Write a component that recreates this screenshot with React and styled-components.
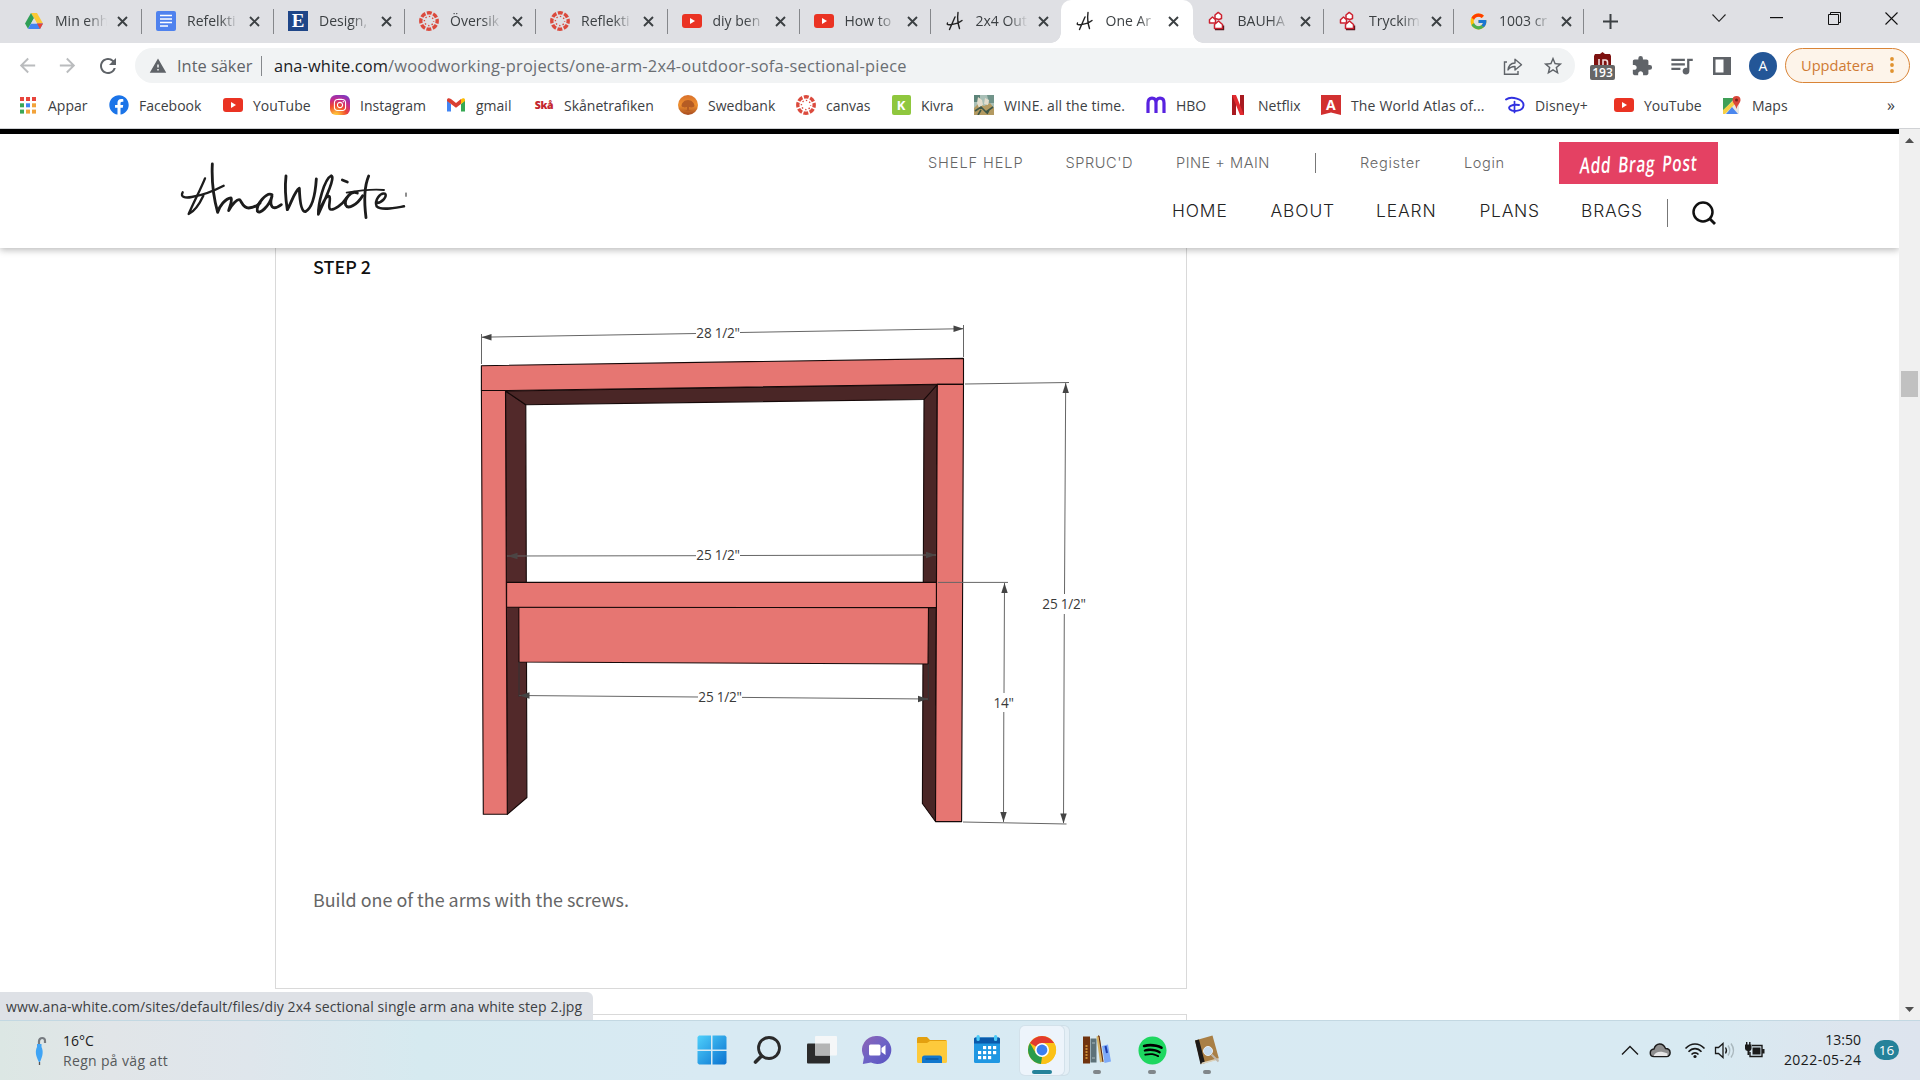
import React from "react";
import styled, { createGlobalStyle, css } from "styled-components";
import {
  MdArrowBack,
  MdArrowForward,
  MdRefresh,
  MdWarning,
  MdExtension,
  MdStarBorder,
  MdQueueMusic,
} from "react-icons/md";
import { FaFacebook, FaInstagram, FaSpotify } from "react-icons/fa";
import { FcGoogle } from "react-icons/fc";

const ui = `"Open Sans", "Noto Sans", sans-serif`;

const Global = createGlobalStyle`
  * { box-sizing: border-box; }
  body { margin: 0; background: #fff; overflow: hidden; }
  svg { display: block; flex: none; }
`;

const Screen = styled.div`
  width: 1920px;
  height: 1080px;
  display: flex;
  flex-direction: column;
  overflow: hidden;
  font-family: ${ui};
  font-size: 14px;
  color: #3c4043;
  background: #fff;
`;

/* ---------- tab strip ---------- */
const TabStrip = styled.div`
  height: 43px;
  flex: none;
  display: flex;
  background: #dfe0e4;
  padding-left: 10px;
`;
const TabBox = styled.div`
  width: ${(p) => p.$w}px;
  height: 43px;
  flex: none;
  display: flex;
  align-items: center;
  padding: 0 0 1px 14px;
  position: relative;
  ${(p) =>
    p.$active &&
    css`
      background: #fff;
      border-radius: 10px 10px 0 0;
      &::before,
      &::after {
        content: "";
        position: absolute;
        bottom: 0;
        width: 10px;
        height: 10px;
      }
      &::before {
        left: -10px;
        background: radial-gradient(circle at 0 0, transparent 9.5px, #fff 10px);
      }
      &::after {
        right: -10px;
        background: radial-gradient(circle at 100% 0, transparent 9.5px, #fff 10px);
      }
    `}
`;
const TabTitle = styled.div`
  width: 52px;
  margin: 0 10px 0 11px;
  white-space: nowrap;
  line-height: 20px;
  mask-image: linear-gradient(to right, #000 62%, transparent 100%);
`;
const TabDivider = styled.div`
  width: 1px;
  height: 25px;
  margin-left: auto;
  background: #85878b;
`;
const NewTab = styled.div`
  width: 52px;
  display: flex;
  align-items: center;
  justify-content: center;
`;
const WindowControls = styled.div`
  margin-left: auto;
  width: 231px;
  height: 36px;
  display: grid;
  grid-template-columns: 60px 55px 60px 54px;
  align-items: center;
  justify-items: center;
`;

/* ---------- toolbar ---------- */
const Toolbar = styled.div`
  height: 45px;
  flex: none;
  display: flex;
  align-items: center;
  padding-left: 16px;
`;
const NavButton = styled.div`
  width: ${(p) => p.$w || 40}px;
  color: ${(p) => (p.$dim ? "#babcbe" : "#5f6368")};
`;
const AddressBar = styled.div`
  width: 1440px;
  height: 35px;
  border-radius: 18px;
  background: #f1f3f4;
  display: flex;
  align-items: center;
  padding: 0 11px 0 14px;
  font-size: 16.4px;
  color: #5f6368;
  white-space: nowrap;
`;
const Security = styled.span`
  margin-left: 10px;
  width: 84px;
`;
const AddressDivider = styled.div`
  width: 1px;
  height: 20px;
  background: #85888c;
  margin-right: 12px;
`;
const Url = styled.span`
  color: #6a6e73;
  letter-spacing: 0.235px;
  b {
    font-weight: 400;
    letter-spacing: 0.1px;
    color: #202124;
  }
`;
const AddressActions = styled.div`
  margin-left: auto;
  display: flex;
  align-items: center;
  gap: 19px;
`;
const Extensions = styled.div`
  width: 210px;
  padding-left: 15px;
  display: flex;
  align-items: center;
  color: #5f6368;
`;
const ExtensionIcon = styled.div`
  margin-left: ${(p) => p.$gap}px;
`;
const Shield = styled.div`
  width: 25px;
  height: 28px;
  display: flex;
  flex-direction: column;
  align-items: center;
`;
const ShieldCount = styled.div`
  width: 25px;
  height: 15px;
  flex: none;
  border-radius: 2px;
  background: #666;
  color: #fff;
  font-size: 12px;
  font-weight: 600;
  line-height: 15px;
  text-align: center;
`;
const Avatar = styled.div`
  width: 28px;
  height: 28px;
  margin-left: 18px;
  border-radius: 50%;
  background: #235697;
  color: #fff;
  display: flex;
  align-items: center;
  justify-content: center;
`;
const UpdateButton = styled.div`
  width: 125px;
  height: 35px;
  border: 1px solid #d98436;
  border-radius: 18px;
  background: #fdf4ea;
  color: #cf7a33;
  font-size: 14.6px;
  display: flex;
  align-items: center;
  justify-content: space-between;
  padding: 0 15px 2px;
`;

/* ---------- bookmarks ---------- */
const Bookmarks = styled.div`
  height: 41px;
  flex: none;
  display: flex;
  padding: 0 0 6px 18px;
  border-bottom: 1px solid #d0d2d5;
`;
const BookmarkItem = styled.div`
  width: ${(p) => p.$w}px;
  flex: none;
  display: flex;
  align-items: center;
  gap: 10px;
  white-space: nowrap;
  letter-spacing: ${(p) => p.$ls || 0}px;
`;
const IconSlot = styled.div`
  width: 20px;
  height: 20px;
  flex: none;
  display: flex;
  align-items: center;
  justify-content: center;
`;
const SkaMark = styled.span`
  color: #c4262e;
  font-size: 10.5px;
  font-weight: 800;
  letter-spacing: -0.3px;
`;
const InstaTile = styled.div`
  width: 20px;
  height: 20px;
  border-radius: 6px;
  display: flex;
  align-items: center;
  justify-content: center;
  color: #fff;
  background: radial-gradient(circle at 30% 105%, #fec53a 8%, #f0492f 42%, #c42a8e 66%, #5b3fd8 100%);
`;
const LetterTile = styled.div`
  width: ${(p) => p.$w || 20}px;
  height: 20px;
  background: ${(p) => p.$bg};
  border-radius: ${(p) => p.$r || 0}px;
  clip-path: ${(p) => (p.$ribbon ? "polygon(0 0, 100% 0, 100% 100%, 50% 88%, 0 100%)" : "none")};
  color: #fff;
  font: 700 ${(p) => p.$size || 15}px / 20px ${(p) => p.$font || ui};
  text-align: center;
`;
const Overflow = styled.div`
  margin: 0 25px 0 auto;
  align-self: center;
  font-size: 16px;
`;

/* ---------- page ---------- */
const Viewport = styled.div`
  height: 891px;
  flex: none;
  display: flex;
  position: relative;
`;
const Page = styled.div`
  width: 1899px;
  height: 891px;
  overflow: hidden;
`;
const SiteHeader = styled.header`
  height: 119px;
  border-top: 5px solid #000;
  background: #fff;
  box-shadow: 0 2px 7px rgba(0, 0, 0, 0.28);
  position: relative;
  display: flex;
  justify-content: space-between;
  padding: 0 181px 0 180px;
`;
const Logo = styled.div`
  padding-top: 27px;
`;
const Menus = styled.div`
  display: flex;
  flex-direction: column;
  align-items: flex-end;
  padding-top: 8px;
  font-family: Inter, sans-serif;
`;
const TopMenu = styled.nav`
  height: 42px;
  display: flex;
  align-items: center;
  font-size: 14.6px;
  color: #666;
  font-weight: 300;
`;
const MainMenu = styled.nav`
  height: 56px;
  display: flex;
  align-items: center;
  padding: 1px 2px 0 0;
  font-size: 17.4px;
  color: #222;
  font-weight: 300;
`;
const MenuLink = styled.a`
  width: ${(p) => p.$w}px;
  white-space: nowrap;
  letter-spacing: ${(p) => p.$ls || 0}px;
  padding-bottom: ${(p) => p.$up || 0}px;
`;
const MenuRule = styled.div`
  width: 1px;
  height: ${(p) => p.$h}px;
  margin-right: ${(p) => p.$gap}px;
  background: #777;
`;
const BragButton = styled.div`
  width: 159px;
  height: 42px;
  background: #e44163;
  color: #fff;
  display: flex;
  align-items: center;
  justify-content: center;
  span {
    font: 600 22px "Open Sans", sans-serif;
    white-space: nowrap;
    transform: scaleX(0.7) skewX(-7deg) rotate(-1deg);
    letter-spacing: 1px;
    word-spacing: 3px;
  }
`;
const StepCard = styled.section`
  width: 912px;
  height: 741px;
  margin-left: 275px;
  border: 1px solid #d9d9d9;
  border-top: 0;
  padding: 4px 37px 0;
  font-family: "Noto Sans CJK SC", "Noto Sans CJK JP", sans-serif;
`;
const NextCard = styled.section`
  width: 912px;
  height: 40px;
  margin: 25px 0 0 275px;
  border: 1px solid #d9d9d9;
`;
const StepTitle = styled.h3`
  margin: 0;
  font-size: 17.9px;
  font-weight: 500;
  line-height: 28px;
  color: #111;
`;
const Figure = styled.figure`
  margin: 40px 0 0 162px;
`;
const Caption = styled.p`
  margin: 45px 0 0;
  font-size: 17.9px;
  line-height: 28px;
  color: #666;
`;
const Scrollbar = styled.div`
  width: 21px;
  background: #f0f0f0;
  display: flex;
  flex-direction: column;
  align-items: center;
  padding: 9px 0 8px;
`;
const Thumb = styled.div`
  width: 17px;
  height: 26px;
  margin: 228px 0 auto;
  background: #c1c1c1;
`;
const StatusBubble = styled.div`
  position: absolute;
  left: 0;
  bottom: 0;
  width: 593px;
  height: 28px;
  padding-left: 6px;
  border-radius: 0 6px 0 0;
  background: #dee1e6;
  line-height: 29px;
  white-space: nowrap;
  letter-spacing: 0.09px;
`;

/* ---------- taskbar ---------- */
const Taskbar = styled.div`
  height: 60px;
  flex: none;
  display: flex;
  border-top: 1px solid #c3d8e2;
  background: linear-gradient(90deg, #dce7e4 0, #e1e5e8 110px, #dfe6ec 250px, #d6eaf0 420px, #d8eaf3 700px, #d8eaf2 1700px, #dde5ee 1850px, #dde4ee 1920px);
`;
const Weather = styled.div`
  width: 684px;
  display: flex;
  align-items: center;
  padding-left: 33px;
  gap: 14px;
  line-height: 20px;
  color: #56595b;
  letter-spacing: 0.33px;
  b {
    display: block;
    font-weight: 400;
    letter-spacing: 0;
    color: #1c1c1c;
  }
`;
const Apps = styled.div`
  display: flex;
  width: 551px;
`;
const AppSlot = styled.div`
  width: 55.1px;
  flex: none;
  display: flex;
  justify-content: center;
  padding-top: 5px;
`;
const AppTile = styled.div`
  width: 48px;
  height: 49px;
  border-radius: 5px;
  display: flex;
  flex-direction: column;
  align-items: center;
  padding-top: 9px;
  ${(p) =>
    p.$active &&
    css`
      width: 44px;
      background: #edf4fb;
      box-shadow: 0 0 0 1px #d3e1ea, 5px 0 0 0 #e4eff6, 5px 0 0 1px #cfdfe8;
    `}
`;
const SpotifyDisc = styled.div`
  width: 30px;
  height: 30px;
  color: #1ed760;
  display: flex;
  align-items: center;
  justify-content: center;
  background: radial-gradient(circle, #000 58%, transparent 59%);
`;
const RunMark = styled.div`
  width: ${(p) => (p.$active ? 20 : 8)}px;
  height: 4px;
  border-radius: 2px;
  margin-top: 5px;
  background: ${(p) => (p.$active ? "#25829a" : "#80868a")};
`;
const Tray = styled.div`
  margin-left: auto;
  display: flex;
  align-items: center;
  padding: 0 21px 2px 0;
  color: #1a1a1a;
`;
const TrayIcons = styled.div`
  display: flex;
  align-items: center;
  margin-right: 11px;
`;
const Clock = styled.div`
  width: 82px;
  text-align: right;
  line-height: 20px;
  white-space: nowrap;
`;
const ClockDate = styled.div`
  letter-spacing: 0.45px;
  margin-right: -0.45px;
`;
const Badge = styled.div`
  width: 25px;
  height: 20px;
  border-radius: 10px;
  margin-left: 13px;
  background: #25829a;
  color: #fff;
  font-size: 13.5px;
  line-height: 20px;
  text-align: center;
`;

/* ---------- icons ---------- */
const Drive = () => (
  <svg width="20" height="20" viewBox="0 0 20 20">
    <path d="M7 2h6l6 10.500h-6z" fill="#fcc934" />
    <path d="M7 2l3 5.200L4 17.800 1 12.500z" fill="#2f9e56" />
    <path d="M7 12.500h12l-3 5.500H4z" fill="#4384f3" />
    <path d="M13 12.500h6L16 18z" fill="#e94335" />
    <path d="M10 7.300l3 5.200H7z" fill="#dfe0e4" />
  </svg>
);
const Docs = () => (
  <svg width="20" height="20" viewBox="0 0 20 20">
    <rect width="20" height="20" rx="2" fill="#4f82ee" />
    <path d="M4 4.500h12M4 8h12M4 11.500h12M4 15h8" stroke="#fff" strokeWidth="1.700" />
  </svg>
);
const Canvas = () => (
  <svg width="20" height="20" viewBox="0 0 20 20">
    <circle cx="10" cy="10" r="8.200" fill="none" stroke="#db4a3d" strokeWidth="3.400" strokeDasharray="4.900 1.540" strokeDashoffset="2.400" />
    <circle cx="10" cy="10" r="4.600" fill="none" stroke="#db4a3d" strokeWidth="1.400" strokeDasharray="1.400 2.213" strokeDashoffset="0.700" />
  </svg>
);
const YouTube = () => (
  <svg width="20" height="20" viewBox="0 0 20 20">
    <rect y="3" width="20" height="14" rx="3" fill="#ea3323" />
    <path d="M8 7l5 3-5 3z" fill="#fff" />
  </svg>
);
const AMark = () => (
  <svg width="20" height="20" viewBox="0 0 20 20" fill="none" stroke="#222" strokeWidth="1.400" strokeLinecap="round">
    <path d="M10 6L4.500 18.500M13 1.500c-.8 6 0 11.500 1.500 16M2.500 12c-1 2 1 2 4 1.500 5-.7 8-2 10.500-4" />
  </svg>
);
const Bauhaus = () => (
  <svg width="20" height="20" viewBox="0 0 20 20" stroke="#cc2230" strokeWidth="1.500" fill="#fff" strokeLinejoin="round">
    <path d="M8 7.500V4l3.200-2.600L14.500 4v3.500l-2.500 1z" />
    <path d="M2.500 12V8.700L5.500 6l3 2.700V12z" />
    <path d="M7.500 17.500v-4l4-3.500 4 3.500v4z" />
    <path d="M8 18.700h8.600V14.500" stroke="#5e1a20" fill="none" strokeWidth="1.200" />
  </svg>
);
const CloseX = () => (
  <svg width="11" height="11" viewBox="0 0 11 11" stroke="#3c4043" strokeWidth="1.900">
    <path d="M1 1l9 9M10 1l-9 9" />
  </svg>
);
const Share = () => (
  <svg width="20" height="20" viewBox="0 0 20 20" fill="none" stroke="#5f6368" strokeWidth="1.400">
    <path d="M4 6H1.500v12.300h13.500V15" />
    <path d="M5 14c.5-4.500 3-6.800 7-7V3.200l6.500 5.500-6.500 5.300V10.500c-3.500 0-5.500 1-7 3.500z" strokeLinejoin="round" />
  </svg>
);
const AppsGrid = () => (
  <svg width="16" height="17" viewBox="0 0 16 17">
    {["#e8453c", "#e8453c", "#e8453c", "#3aa757", "#4285f4", "#f2a33a", "#3aa757", "#f2a33a", "#f2a33a"].map((c, i) => (
      <rect key={i} x={(i % 3) * 6} y={Math.floor(i / 3) * 6.3} width="4" height="4" fill={c} />
    ))}
  </svg>
);
const Gmail = () => (
  <svg width="18" height="14" viewBox="0 0 18 14">
    <path d="M0 2v11.500h4V6z" fill="#4285f4" />
    <path d="M18 2v11.500h-4V6z" fill="#34a853" />
    <path d="M14 1.200V6l4-3V2c0-2-2-2.500-4-.8z" fill="#fbbc04" />
    <path d="M0 2C0 0 2-.5 4 1l5 4 5-4v5L9 9.800 4 6 0 3z" fill="#d93f32" />
  </svg>
);
const Swedbank = () => (
  <svg width="20" height="20" viewBox="0 0 20 20">
    <defs>
      <linearGradient id="swed" x1="0" y1="0" x2="0" y2="1">
        <stop offset="0" stopColor="#d8702c" />
        <stop offset=".5" stopColor="#f0912f" />
        <stop offset="1" stopColor="#a54a20" />
      </linearGradient>
    </defs>
    <circle cx="10" cy="10" r="10" fill="url(#swed)" />
    <path d="M3.500 11c0-3 3-6 6.500-6s6.500 3 6.500 6c-1.500 2-4 1.500-5.500 1v3l3 1H6l3-1v-3c-1.500.5-4 1-5.500-1z" fill="#b55c24" />
  </svg>
);
const Wine = () => (
  <svg width="20" height="20" viewBox="0 0 20 20">
    <rect width="20" height="20" fill="#a9bfb6" />
    <path d="M0 0h6v7H0z" fill="#5c8378" />
    <path d="M13 0h7v8h-5z" fill="#71948a" />
    <path d="M0 13l5-5 5 3 6-3 4 5v7H0z" fill="#b39a61" />
    <path d="M4 2l4 3 1 5-4 3-2-5zM11 3l4 2-1 5-4-1z" fill="#e3ddcc" />
    <path d="M1 16l6-4 5 5 7-5M4 20l3-5M13 19l2-4" stroke="#3e5747" strokeWidth="1.600" fill="none" />
  </svg>
);
const Hbo = () => (
  <svg width="20" height="18" viewBox="0 0 20 18" fill="none" stroke="#5822e0" strokeWidth="3.200">
    <path d="M2 17V7c0-3.300 1.500-4.800 4-4.800S10 3.800 10 7v10M10 7c0-3.300 1.500-4.800 4-4.800S18 3.800 18 7v10" />
  </svg>
);
const Netflix = () => (
  <svg width="12" height="20" viewBox="0 0 12 20">
    <path d="M0 0h4v20H0zM8 0h4v20H8z" fill="#a81a20" />
    <path d="M0 0h4l8 20H8z" fill="#e22a2f" />
  </svg>
);
const Disney = () => (
  <svg width="20" height="18" viewBox="0 0 20 18" fill="none" stroke="#3030e0" strokeLinecap="round">
    <path d="M1 3.500C6-.5 19 3 18.500 9.500 18 15.500 8 16 5 13.500 2 10.500 7 8.200 14 9" strokeWidth="1.900" />
    <path d="M9.500 5.500v11" strokeWidth="1.700" />
  </svg>
);
const Maps = () => (
  <svg width="18" height="19" viewBox="0 0 18 19">
    <rect y="2" width="16" height="16" rx="1" fill="#e8e8e4" />
    <path d="M0 2h12L0 15z" fill="#3f9f57" />
    <path d="M0 14L11 4l3 2L2 18H0z" fill="#f6cf45" />
    <path d="M3 18l6-7 6 7z" fill="#4b87ee" />
    <path d="M13.500 0a4 4 0 014 4c0 3-3 4.500-4 9-1-4.500-4-6-4-9a4 4 0 014-4z" fill="#d9473a" />
    <circle cx="13.500" cy="4" r="1.500" fill="#7b2119" />
  </svg>
);
const UBlock = () => (
  <svg width="19" height="13" viewBox="0 0 19 13">
    <path d="M9.500 0L12 2h5l1 2v9H1V4l1-2h5z" fill="#7e1210" />
    <path d="M6 7v6M10 13V8h2.500c1.500 0 2 1 2 2.300V13" stroke="#f1dede" strokeWidth="1.600" fill="none" />
  </svg>
);
const Signature = () => (
  <svg width="230" height="60" viewBox="60 110 690 180" fill="none" stroke="#1c1c1c" strokeWidth="8.500" strokeLinecap="round" strokeLinejoin="round">
    <path d="M135 162C122 195 100 235 86 269C100 262 118 240 130 214" strokeWidth="7" />
    <path d="M68 204C60 218 75 222 95 218C130 212 168 196 191 184" strokeWidth="7" />
    <path d="M157 119C155 160 160 218 173 264C178 246 196 222 213 221C218 230 208 248 206 259C216 240 233 222 240 227C246 235 250 251 266 251C284 250 292 244 300 236" />
    <path d="M336 211C320 202 288 240 292 260C298 272 328 246 336 215C327 244 336 262 364 241" />
    <path d="M378 155C374 190 377 225 382 256C394 236 404 200 418 192C419 220 422 262 436 262C456 252 466 210 469 164" />
    <path d="M475 270C474 240 492 165 514 154C526 158 500 215 476 268C484 240 500 212 508 216C514 224 502 250 511 255C522 258 546 242 560 220" strokeWidth="8" />
    <path d="M547 167L562 173M592 206C572 196 552 226 557 242C564 258 592 240 608 214" />
    <path d="M626 155C611 190 613 240 618 280" />
    <path d="M560 205C600 198 640 194 672 197" strokeWidth="5.500" />
    <path d="M650 236C668 234 682 216 675 208C660 204 642 230 650 246C664 260 708 250 732 246" strokeWidth="7.500" />
    <path d="M738 206v10" strokeWidth="3" />
  </svg>
);

/* ---------- plan drawing ---------- */
const Arrow = ({ x, y, dir, fill = "#444" }) => {
  const turn = { left: 0, up: 90, right: 180, down: 270 }[dir];
  return <path d="M0 0L10 -3.200V3.200z" fill={fill} transform={`translate(${x} ${y}) rotate(${turn})`} />;
};
const DimLabel = styled.text`
  font-family: "Open Sans", sans-serif;
  font-size: 13.6px;
  letter-spacing: -0.25px;
  fill: #3a3a3a;
  text-anchor: middle;
`;
const ArmPlan = () => (
  <svg width="620" height="520" viewBox="475 320 620 520">
    <g stroke="#150808" strokeWidth="1.100" strokeLinejoin="round">
      <path d="M505.500 391L525.800 404.700L526.900 797.500L507.300 814.300z" fill="#52292a" />
      <path d="M937.300 384.500L924 399.500L922.400 803.500L935.500 821.500z" fill="#4a2626" />
      <path d="M505.500 391L937.300 384.500L924 399.500L525.800 404.700z" fill="#4a2626" />
      <path d="M481.400 365.700L963.500 358.400V384.300H937.300L505.500 390.500H481.400z" fill="#e67672" />
      <path d="M481.400 390.500H505.500L507.300 814.300H483.300z" fill="#e67672" />
      <path d="M937.300 384.400H963.500L961.600 821.600H935.500z" fill="#e67672" />
      <path d="M518.800 607L928.500 607.500L928 664L519 662z" fill="#e67672" />
      <path d="M506.600 582.400H936.400V607.600L506.600 607.200z" fill="#e67672" />
    </g>
    <g stroke="#666" strokeWidth="1" fill="none">
      <path d="M481.500 334V364M963.500 325V357M481.500 337.200L696 333.500M740 332.500L963.500 328.700" />
      <path d="M507 556L696 555.700M740 555.500L936 555" />
      <path d="M519 695.500L698 697M742 697.400L928 699" />
      <path d="M519 662V697M928.300 664V701" stroke="#333" />
      <path d="M938 582.400H1008M1004.500 583L1004 693M1003.800 712L1003.500 822" />
      <path d="M965 384L1069 382.500M1065.700 383L1064.500 594M1064.300 614L1063.500 823M963 822L1066.500 824" />
    </g>
    <Arrow x={481.5} y={337.2} dir="left" />
    <Arrow x={963.5} y={328.700} dir="right" />
    <Arrow x={507.5} y={556} dir="left" fill="#4b4544" />
    <Arrow x={936} y={555} dir="right" fill="#4b4544" />
    <Arrow x={519.500} y={695.500} dir="left" />
    <Arrow x={928} y={699} dir="right" />
    <Arrow x={1004.500} y={583} dir="up" />
    <Arrow x={1003.500} y={822} dir="down" />
    <Arrow x={1065.700} y={383} dir="up" />
    <Arrow x={1063.500} y={823.500} dir="down" />
    <DimLabel x="718" y="338.200">28 1/2"</DimLabel>
    <DimLabel x="718" y="560.200">25 1/2"</DimLabel>
    <DimLabel x="720" y="702.200">25 1/2"</DimLabel>
    <DimLabel x="1003.700" y="708">14"</DimLabel>
    <DimLabel x="1064" y="609">25 1/2"</DimLabel>
  </svg>
);

/* ---------- taskbar icons ---------- */
const Windows = () => (
  <svg width="30" height="30" viewBox="0 0 30 30">
    <defs>
      <linearGradient id="win" x1="0" y1="0" x2="1" y2="1">
        <stop offset="0" stopColor="#4fd0fb" />
        <stop offset="1" stopColor="#0a72d0" />
      </linearGradient>
    </defs>
    <path d="M2 .5h12v14H.5V2zM15.500.5H28L29.500 2v12.500h-14zM.5 16H14v13.500H2L.5 28zM15.500 16h14v12l-1.500 1.500H15.500z" fill="url(#win)" />
  </svg>
);
const Search = () => (
  <svg width="30" height="30" viewBox="0 0 30 30" fill="none" stroke="#2a2a2a">
    <circle cx="17" cy="13" r="10.500" strokeWidth="2.800" />
    <path d="M9.500 21L3.500 27" strokeWidth="3.600" strokeLinecap="round" />
  </svg>
);
const TaskView = () => (
  <svg width="30" height="30" viewBox="0 0 30 30">
    <rect x="0" y="8.500" width="23" height="20" rx="1" fill="#2b2b2b" />
    <rect x="8" y="1" width="22" height="19.500" rx="1" fill="#f5f7f8" />
    <rect x="8" y="8.500" width="15" height="12" fill="#b4b5b5" />
  </svg>
);
const Chat = () => (
  <svg width="30" height="30" viewBox="0 0 30 30">
    <defs>
      <linearGradient id="chat" x1="0" y1="0" x2="1" y2="1">
        <stop offset="0" stopColor="#9064b4" />
        <stop offset=".5" stopColor="#6d63c6" />
        <stop offset="1" stopColor="#5852c0" />
      </linearGradient>
    </defs>
    <path d="M15 1a14 14 0 11-6 26.500L.8 29 2 22A14 14 0 0115 1z" fill="url(#chat)" />
    <rect x="7" y="9.500" width="11.500" height="11" rx="1.500" fill="#fff" />
    <path d="M19.500 13l4-3v10l-4-3z" fill="#fff" />
  </svg>
);
const Folder = () => (
  <svg width="30" height="30" viewBox="0 0 30 30">
    <path d="M0 3.500Q0 2 1.500 2H10l3 3h15.500Q30 5 30 6.500V12H0z" fill="#e3a010" />
    <path d="M0 8h10l3-2h17v20.500Q30 28 28.500 28h-27Q0 28 0 26.500z" fill="#fdca3c" />
    <path d="M5 28v-5q0-2.500 2.500-2.500h15Q25 20.500 25 23v5z" fill="#1177cd" />
    <path d="M8.500 24h13" stroke="#0b4f93" strokeWidth="1.200" />
  </svg>
);
const Calendar = () => (
  <svg width="30" height="30" viewBox="0 0 30 30">
    <rect x="2" y="2.500" width="26" height="25.500" rx="1.500" fill="#1f97e2" />
    <path d="M3.500 2.500h23q1.500 0 1.500 1.500v4.500H2V4q0-1.500 1.500-1.500z" fill="#0a5aab" />
    <rect x="4.500" y="0" width="3.200" height="6" rx="1.500" fill="#4ccbf7" />
    <rect x="22" y="0" width="3.200" height="6" rx="1.500" fill="#4ccbf7" />
    {[[11, 11], [16, 11], [21, 11], [6, 16], [11, 16], [16, 16], [21, 16], [6, 21], [11, 21], [16, 21]].map(([x, y]) => (
      <rect key={`${x}-${y}`} x={x} y={y} width="3.200" height="3.200" fill="#fff" />
    ))}
  </svg>
);
const Chrome = () => (
  <svg width="30" height="30" viewBox="0 0 30 30">
    <circle cx="15" cy="15" r="14" fill="#fbc116" />
    <path d="M15 15L2.900 8A14 14 0 0127.100 8H15z" fill="#e33b2e" />
    <path d="M2.900 8L9 18.500 15 22l-1 7A14 14 0 012.900 8z" fill="#2a9c4b" />
    <path d="M15 8h12.100A14 14 0 0114 29l7-11z" fill="#fbc116" />
    <circle cx="15" cy="15" r="7" fill="#fff" />
    <circle cx="15" cy="15" r="5.400" fill="#3d7fee" />
  </svg>
);
const Books = () => (
  <svg width="30" height="30" viewBox="0 0 30 30">
    <rect x="1" y="1.500" width="7" height="27" fill="#70340f" />
    <path d="M4.500 10v14" stroke="#c88a35" strokeWidth="2" strokeDasharray="2 1" />
    <rect x="8.500" y="3.500" width="6" height="24" fill="#5d7279" />
    <path d="M10 8h3M10 23h3" stroke="#a8b9bd" />
    <path d="M14.500 1.500l3-1L21.500 26l-3.500 1.500z" fill="#d5b263" />
    <path d="M16 1l1 0 4 26" stroke="#5a2316" fill="none" />
    <path d="M20 11l6-1.500 3 17-6.500 1.500z" fill="#7eaaf8" />
    <path d="M23.500 11l1.500 7" stroke="#1b3dae" strokeWidth="2" />
  </svg>
);
const Journal = () => (
  <svg width="30" height="30" viewBox="0 0 30 30">
    <path d="M3 5.500L20.500.5 27 24 9 29z" fill="#a97f45" />
    <path d="M3 5.500L7 4.400 13 28l-4.500 1.200z" fill="#1d1a18" />
    <path d="M9 29.500l18-5v-1.500L10 27.500z" fill="#ddd3bd" />
    <circle cx="16" cy="16" r="4.500" fill="#c5dbee" stroke="#e9eef2" />
    <path d="M19.500 19.500l7 7" stroke="#bfb8ad" strokeWidth="1.800" />
  </svg>
);
const Umbrella = () => (
  <svg width="16" height="30" viewBox="0 0 16 30">
    <path d="M6 9V5.500C6 .8 12.500.8 12 5.500V7" fill="none" stroke="#777b80" strokeWidth="2.200" />
    <path d="M4 8h4.500v3c2 4 1.500 9-2 16-4-7-4.500-12-2.500-16z" fill="#3fa4f5" />
    <path d="M6.500 26v3" stroke="#555" strokeWidth="1.300" />
  </svg>
);

/* ---------- data ---------- */
const tabs = [
  { t: "Min enh", i: <Drive />, w: 132 },
  { t: "Refelkti", i: <Docs />, w: 132 },
  {
    t: "Design,",
    i: (
      <LetterTile $bg="#1f4688" $size={19} $font='"Liberation Serif", serif'>
        E
      </LetterTile>
    ),
    w: 131,
  },
  { t: "Översik", i: <Canvas />, w: 131 },
  { t: "Reflekti", i: <Canvas />, w: 131.5 },
  { t: "diy ben", i: <YouTube />, w: 132 },
  { t: "How to", i: <YouTube />, w: 131 },
  { t: "2x4 Out", i: <AMark />, w: 130, noRule: true },
  { t: "One Ar", i: <AMark />, w: 132, active: true, noRule: true },
  { t: "BAUHA", i: <Bauhaus />, w: 131.5 },
  { t: "Tryckim", i: <Bauhaus />, w: 130 },
  { t: "1003 cr", i: <FcGoogle size={19} />, w: 130 },
];

const bookmarks = [
  ["Appar", <AppsGrid />, 91],
  ["Facebook", <FaFacebook size={20} color="#1b74e8" />, 114],
  ["YouTube", <YouTube />, 107],
  ["Instagram", <InstaTile><FaInstagram size={14} /></InstaTile>, 116],
  ["gmail", <Gmail />, 88],
  ["Skånetrafiken", <SkaMark>Skå</SkaMark>, 144],
  ["Swedbank", <Swedbank />, 118],
  ["canvas", <Canvas />, 95],
  ["Kivra", <LetterTile $bg="#8fc73e" $w={19} $r={2} $size={13}>K</LetterTile>, 83],
  ["WINE. all the time.", <Wine />, 172, 0.1],
  ["HBO", <Hbo />, 82],
  ["Netflix", <Netflix />, 93],
  ["The World Atlas of...", <LetterTile $bg="#d23030" $size={14} $ribbon>A</LetterTile>, 184, 0.16],
  ["Disney+", <Disney />, 109, 0.15],
  ["YouTube", <YouTube />, 108],
  ["Maps", <Maps />, 90],
];

const apps = [
  [<Windows />],
  [<Search />],
  [<TaskView />],
  [<Chat />],
  [<Folder />],
  [<Calendar />],
  [<Chrome />, true, true],
  [<Books />, true],
  [<SpotifyDisc><FaSpotify size={29} /></SpotifyDisc>, true],
  [<Journal />, true],
];

export default function App() {
  return (
    <Screen>
      <Global />
      <TabStrip>
        {tabs.map((tab, n) => (
          <TabBox key={n} $w={tab.w} $active={tab.active}>
            <IconSlot>{tab.i}</IconSlot>
            <TabTitle>{tab.t}</TabTitle>
            <CloseX />
            {!tab.noRule && <TabDivider />}
          </TabBox>
        ))}
        <NewTab>
          <svg width="15" height="15" viewBox="0 0 15 15" stroke="#3c4043" strokeWidth="2">
            <path d="M7.500 0v15M0 7.500h15" />
          </svg>
        </NewTab>
        <WindowControls>
          <svg width="14" height="8" viewBox="0 0 14 8" fill="none" stroke="#222" strokeWidth="1.100">
            <path d="M.5.5L7 7.300 13.500.5" />
          </svg>
          <svg width="13" height="2">
            <rect width="13" height="1.200" fill="#111" />
          </svg>
          <svg width="13" height="13" viewBox="0 0 13 13" fill="none" stroke="#111">
            <path d="M.5 2.500h10v10H.5zM2.500 2.500v-2h10v10h-2" />
          </svg>
          <svg width="13" height="13" viewBox="0 0 13 13" stroke="#111" strokeWidth="1.100">
            <path d="M.5.5l12 12M12.500.5l-12 12" />
          </svg>
        </WindowControls>
      </TabStrip>

      <Toolbar>
        <NavButton $dim>
          <MdArrowBack size={23} />
        </NavButton>
        <NavButton $dim>
          <MdArrowForward size={23} />
        </NavButton>
        <NavButton $w={39}>
          <MdRefresh size={24} />
        </NavButton>
        <AddressBar>
          <MdWarning size={18} />
          <Security>Inte säker</Security>
          <AddressDivider />
          <Url>
            <b>ana-white.com</b>/woodworking-projects/one-arm-2x4-outdoor-sofa-sectional-piece
          </Url>
          <AddressActions>
            <Share />
            <MdStarBorder size={22} />
          </AddressActions>
        </AddressBar>
        <Extensions>
          <Shield>
            <UBlock />
            <ShieldCount>193</ShieldCount>
          </Shield>
          <ExtensionIcon $gap={16}>
            <MdExtension size={22} />
          </ExtensionIcon>
          <ExtensionIcon $gap={15}>
            <MdQueueMusic size={27} />
          </ExtensionIcon>
          <ExtensionIcon $gap={18}>
            <svg width="18" height="18" viewBox="0 0 18 18">
              <path d="M0 0h18v18H0zM2.500 2.500v13h8v-13z" fill="#5f6368" fillRule="evenodd" />
            </svg>
          </ExtensionIcon>
          <Avatar>A</Avatar>
        </Extensions>
        <UpdateButton>
          Uppdatera
          <svg width="4" height="16" viewBox="0 0 4 16" fill="#e0922f">
            <circle cx="2" cy="2" r="1.900" />
            <circle cx="2" cy="8" r="1.900" />
            <circle cx="2" cy="14" r="1.900" />
          </svg>
        </UpdateButton>
      </Toolbar>

      <Bookmarks>
        {bookmarks.map(([label, icon, w, ls], n) => (
          <BookmarkItem key={n} $w={w} $ls={ls}>
            <IconSlot>{icon}</IconSlot>
            {label}
          </BookmarkItem>
        ))}
        <Overflow>»</Overflow>
      </Bookmarks>

      <Viewport>
        <Page>
          <SiteHeader>
            <Logo>
              <Signature />
            </Logo>
            <Menus>
              <TopMenu>
                <MenuLink $w={137.5} $ls={0.9}>SHELF HELP</MenuLink>
                <MenuLink $w={110.5} $ls={0.55}>SPRUC'D</MenuLink>
                <MenuLink $w={139} $ls={0.5}>PINE + MAIN</MenuLink>
                <MenuRule $h={20} $gap={44} />
                <MenuLink $w={104} $ls={0.7}>Register</MenuLink>
                <MenuLink $w={95} $ls={0.6}>Login</MenuLink>
                <BragButton>
                  <span>Add Brag Post</span>
                </BragButton>
              </TopMenu>
              <MainMenu>
                <MenuLink $w={98.5} $ls={0.9} $up={4}>HOME</MenuLink>
                <MenuLink $w={105.5} $ls={0.9} $up={4}>ABOUT</MenuLink>
                <MenuLink $w={103.5} $ls={0.9} $up={4}>LEARN</MenuLink>
                <MenuLink $w={101.5} $ls={0.7} $up={4}>PLANS</MenuLink>
                <MenuLink $w={86} $ls={0.9} $up={4}>BRAGS</MenuLink>
                <MenuRule $h={28} $gap={24} />
                <svg width="24" height="24" viewBox="0 0 24 24" fill="none" stroke="#111" strokeWidth="2.500">
                  <circle cx="11" cy="11" r="9.500" />
                  <path d="M17.500 17.500l5.500 5.500" strokeWidth="2.800" />
                </svg>
              </MainMenu>
            </Menus>
          </SiteHeader>
          <StepCard>
            <StepTitle>STEP 2</StepTitle>
            <Figure>
              <ArmPlan />
            </Figure>
            <Caption>Build one of the arms with the screws.</Caption>
          </StepCard>
          <NextCard />
        </Page>
        <Scrollbar>
          <svg width="9" height="5" viewBox="0 0 9 5">
            <path d="M4.500 0L9 5H0z" fill="#505050" />
          </svg>
          <Thumb />
          <svg width="9" height="5" viewBox="0 0 9 5">
            <path d="M4.500 5L9 0H0z" fill="#505050" />
          </svg>
        </Scrollbar>
        <StatusBubble>www.ana-white.com/sites/default/files/diy 2x4 sectional single arm ana white step 2.jpg</StatusBubble>
      </Viewport>

      <Taskbar>
        <Weather>
          <Umbrella />
          <div>
            <b>16°C</b>
            Regn på väg att
          </div>
        </Weather>
        <Apps>
          {apps.map(([icon, running, active], n) => (
            <AppSlot key={n}>
              <AppTile $active={active}>
                {icon}
                {running && <RunMark $active={active} />}
              </AppTile>
            </AppSlot>
          ))}
        </Apps>
        <Tray>
          <TrayIcons>
            <svg width="150" height="22" viewBox="1618 1038 150 22" fill="none" stroke="#1a1a1a" strokeWidth="1.400">
              <path d="M1622 1053.500L1630 1045.500L1638 1053.500" />
              <path d="M1654 1055.500C1649 1055.500 1649 1048.500 1654 1048C1656 1041.500 1663 1041.500 1665.500 1047.500C1671.500 1047.500 1671.500 1055.500 1666.500 1055.500z" fill="#8e8e8e" />
              <path d="M1653.500 1055C1656 1050 1661 1050 1667.500 1052.500V1055z" fill="#e6e6e6" stroke="none" />
              <path d="M1685.500 1047.500C1691 1041.500 1699 1041.500 1704.500 1047.500M1688.500 1050.800C1692.500 1046.500 1697.500 1046.500 1701.500 1050.800M1691.500 1053.500C1693.500 1051.300 1696.500 1051.300 1698.500 1053.500" strokeWidth="1.600" />
              <circle cx="1695" cy="1055.500" r="1.600" fill="#1a1a1a" stroke="none" />
              <path d="M1715.500 1046.500H1718.500L1723 1042.500V1056.500L1718.500 1052.500H1715.500zM1725.500 1046.500Q1727.500 1049.500 1725.500 1052.500" strokeWidth="1.300" />
              <path d="M1728 1044.500Q1731.500 1049.500 1728 1054.500M1731 1042.500Q1736 1049.500 1731 1056.500" stroke="#a9b7bd" />
              <path d="M1752 1044.500H1762V1055.500H1750V1051" />
              <path d="M1752.500 1046.500H1760.500V1053.500H1752.500zM1762 1048h2.500v4.500h-2.500zM1745 1043.500h6.500v4q0 2-2 2.500v4h-2v-4q-2.500-.5-2.500-2.500z" fill="#1a1a1a" stroke="none" />
              <path d="M1746.700 1044v-3M1749.800 1044v-3" />
            </svg>
          </TrayIcons>
          <Clock>
            <div>13:50</div>
            <ClockDate>2022-05-24</ClockDate>
          </Clock>
          <Badge>16</Badge>
        </Tray>
      </Taskbar>
    </Screen>
  );
}
